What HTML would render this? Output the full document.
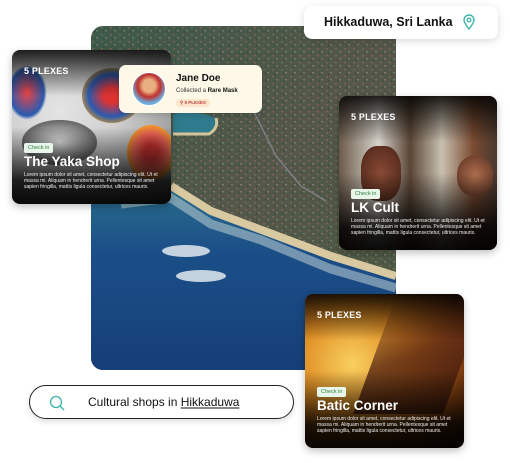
<!DOCTYPE html>
<html><head><meta charset="utf-8"><style>
*{margin:0;padding:0;box-sizing:border-box}
body{width:510px;height:463px;background:#fff;position:relative;overflow:hidden;font-family:"Liberation Sans",sans-serif}
.abs{position:absolute}
.card{position:absolute;border-radius:8px;overflow:hidden;color:#fff;box-shadow:0 3px 8px rgba(0,0,0,.25)}
.card .shade{position:absolute;inset:0;background:linear-gradient(to bottom,rgba(0,0,0,.85) 0%,rgba(0,0,0,0) 30%,rgba(0,0,0,0) 50%,rgba(0,0,0,.85) 85%,rgba(0,0,0,.95) 100%)}
.plex{position:absolute;left:12px;top:16px;font-size:9px;font-weight:bold;letter-spacing:.2px}
.chk{position:absolute;left:12px;background:#e8f6ea;color:#2e7d3e;font-size:5.5px;padding:2px 4px;border-radius:2px}
.ttl{position:absolute;left:12px;font-size:13.5px;font-weight:bold}
.txt{position:absolute;left:12px;width:138px;font-size:5px;line-height:6.2px;color:#eee}
</style></head><body>

<div class="abs" style="left:91px;top:26px;width:305px;height:344px;border-radius:12px;overflow:hidden">
<svg width="305" height="344" viewBox="0 0 305 344">
<defs>
<linearGradient id="land" x1="0" y1="0" x2="1" y2="1"><stop offset="0" stop-color="#3d5a4a"/><stop offset=".5" stop-color="#54574a"/><stop offset="1" stop-color="#4a5a42"/></linearGradient>
<linearGradient id="sea" x1="0" y1="0" x2="0" y2="1"><stop offset="0" stop-color="#2a6e8c"/><stop offset=".35" stop-color="#1b4f88"/><stop offset="1" stop-color="#163e78"/></linearGradient>
<pattern id="dots" width="9" height="7" patternUnits="userSpaceOnUse"><rect x="1" y="1" width="2" height="1.5" fill="#9a6a58" opacity=".6"/><rect x="5" y="4" width="2" height="1.5" fill="#b8a89a" opacity=".4"/><rect x="3" y="5" width="1.5" height="1.5" fill="#2e4a30" opacity=".7"/></pattern>
</defs>
<rect width="305" height="344" fill="url(#land)"/>
<rect width="305" height="344" fill="url(#dots)"/>
<path d="M0 175 L40 168 L80 160 L120 185 L160 200 L240 230 L305 250 L305 344 L0 344Z" fill="url(#sea)"/>
<path d="M80 160 L120 185 L160 200 L240 230 L305 250" stroke="#d9c9a0" stroke-width="8" fill="none"/>
<path d="M30 178 L80 172 L120 198 L170 214 L240 243 L305 262" stroke="#bfd0d2" stroke-width="9" fill="none" opacity=".55"/>
<path d="M82 88 Q105 84 125 92 Q128 102 118 108 L82 108Z" fill="#2f7a8c"/>
<path d="M82 108 L118 108 Q128 102 125 92" stroke="#d3c49a" stroke-width="3" fill="none"/>
<path d="M140 40 L160 80 L185 130 L210 160 L235 175" stroke="#8a8a92" stroke-width="1.5" fill="none" opacity=".8"/>
<ellipse cx="95" cy="225" rx="24" ry="6" fill="#e2eaee" opacity=".85"/>
<ellipse cx="110" cy="250" rx="25" ry="6" fill="#e2eaee" opacity=".85"/>
</svg></div>

<div class="abs" style="left:304px;top:6px;width:194px;height:33px;background:#fff;border-radius:8px;box-shadow:0 2px 8px rgba(0,0,0,.15);font-size:12.5px;font-weight:bold;color:#111;padding:9px 0 0 20px">Hikkaduwa, Sri Lanka
<svg class="abs" style="left:158px;top:8px" width="14" height="16" viewBox="0 0 14 16"><path d="M7 15 C3 10 2 8 2 6 A5 5 0 0 1 12 6 C12 8 11 10 7 15Z" fill="none" stroke="#3bb5a8" stroke-width="1.4"/><circle cx="7" cy="6" r="1.8" fill="none" stroke="#3bb5a8" stroke-width="1.3"/></svg></div>

<div class="card" style="left:12px;top:50px;width:159px;height:154px;background:radial-gradient(circle at 30% 40%,#e4e4e4,#cfcfcf 40%,#888 100%)">
<div class="abs" style="left:70px;top:18px;width:60px;height:55px;border-radius:50%;background:radial-gradient(#d33 20%,#2a5ab0 55%,#e8a020 80%,transparent 81%)"></div>
<div class="abs" style="left:115px;top:75px;width:48px;height:55px;border-radius:50%;background:radial-gradient(#c33 20%,#e65 50%,#f0a020 75%,transparent 76%)"></div>
<div class="abs" style="left:-5px;top:15px;width:40px;height:55px;border-radius:50%;background:radial-gradient(#e44,#2a5ab0 60%,transparent 70%)"></div>
<div class="abs" style="left:10px;top:70px;width:75px;height:45px;border-radius:40%;background:radial-gradient(#eee,#666 70%,transparent 72%)"></div>
<div class="shade"></div>
<div class="plex">5 PLEXES</div>
<div class="chk" style="top:93px">Check in</div>
<div class="ttl" style="top:104px">The Yaka Shop</div>
<div class="txt" style="top:122px">Lorem ipsum dolor sit amet, consectetur adipiscing elit. Ut et massa mi. Aliquam in hendrerit urna. Pellentesque sit amet sapien fringilla, mattis ligula consectetur, ultrices mauris.</div>
</div>

<div class="abs" style="left:119px;top:65px;width:143px;height:48px;background:#fdf8e8;border-radius:7px;box-shadow:0 2px 6px rgba(0,0,0,.15)">
<div class="abs" style="left:13px;top:7px;width:34px;height:34px;border-radius:50%;background:radial-gradient(circle at 50% 40%,#e8b080 25%,#c03030 45%,#6ab0e0 70%);border:1.5px solid #fff"></div>
<div class="abs" style="left:57px;top:8px;font-size:10px;font-weight:bold;color:#111">Jane Doe</div>
<div class="abs" style="left:57px;top:23px;font-size:6px;color:#333">Collected a <b style="color:#111">Rare Mask</b></div>
<div class="abs" style="left:57px;top:34px;font-size:4.5px;background:#fde6cc;color:#b44;padding:1px 4px;border-radius:4px;font-weight:bold">⚲ 5 PLEXES</div>
</div>

<div class="card" style="left:339px;top:96px;width:158px;height:154px;background:linear-gradient(90deg,#6b5a4a,#d8d4cc 25%,#5a4535 45%,#c8c0b0 65%,#7a4a30 85%,#4a3a30)">
<div class="abs" style="left:22px;top:50px;width:40px;height:55px;border-radius:40%;background:radial-gradient(#8a4a35,#4a2418)"></div>
<div class="abs" style="left:118px;top:60px;width:36px;height:40px;border-radius:45%;background:radial-gradient(#b07050,#5a3020)"></div>
<div class="shade"></div>
<div class="plex">5 PLEXES</div>
<div class="chk" style="top:93px">Check in</div>
<div class="ttl" style="top:104px">LK Cult</div>
<div class="txt" style="top:122px">Lorem ipsum dolor sit amet, consectetur adipiscing elit. Ut et massa mi. Aliquam in hendrerit urna. Pellentesque sit amet sapien fringilla, mattis ligula consectetur, ultrices mauris.</div>
</div>

<div class="abs" style="left:29px;top:385px;width:265px;height:34px;border:1.3px solid #222;border-radius:17px;background:#fff;box-shadow:0 3px 6px rgba(0,0,0,.12)">
<svg class="abs" style="left:19px;top:9px" width="16" height="16" viewBox="0 0 16 16"><circle cx="7" cy="7" r="5.5" fill="none" stroke="#3bb5a8" stroke-width="1.3"/><path d="M11 11 L15 15" stroke="#3bb5a8" stroke-width="1.3"/></svg>
<div class="abs" style="left:58px;top:9px;font-size:12px;color:#111">Cultural shops in <span style="text-decoration:underline;text-decoration-color:#888;text-decoration-thickness:1.5px">Hikkaduwa</span></div>
</div>

<div class="card" style="left:305px;top:294px;width:159px;height:154px;background:radial-gradient(circle at 30% 45%,#f8d060,#e08a20 40%,#7a3a10 80%,#3a1a08)">
<div class="abs" style="left:70px;top:0;width:90px;height:120px;background:linear-gradient(160deg,rgba(0,0,0,0),rgba(90,40,20,.8) 50%,rgba(60,25,10,.9));transform:skewX(-20deg)"></div>
<div class="shade"></div>
<div class="plex">5 PLEXES</div>
<div class="chk" style="top:93px">Check in</div>
<div class="ttl" style="top:104px">Batic Corner</div>
<div class="txt" style="top:122px">Lorem ipsum dolor sit amet, consectetur adipiscing elit. Ut et massa mi. Aliquam in hendrerit urna. Pellentesque sit amet sapien fringilla, mattis ligula consectetur, ultrices mauris.</div>
</div>
</body></html>
